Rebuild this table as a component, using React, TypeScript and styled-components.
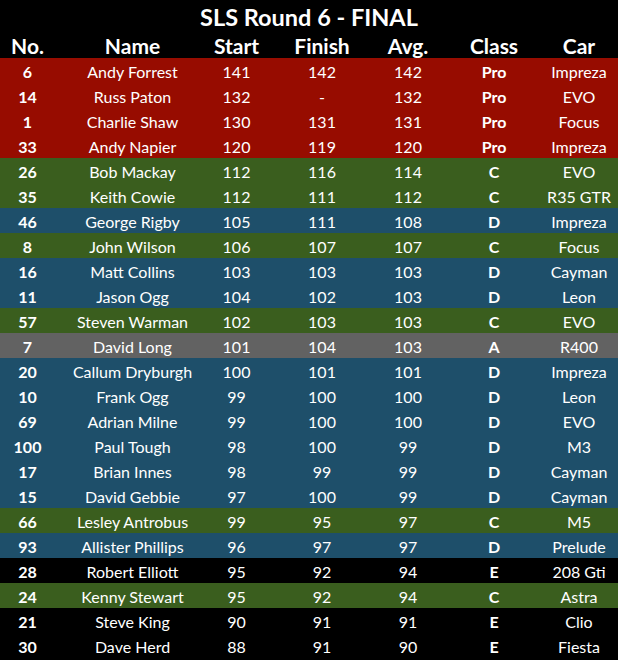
import { FC } from "react";
import styled, { createGlobalStyle } from "styled-components";

type Klass = "Pro" | "C" | "D" | "A" | "E"

interface IEntry {
    no: string
    name: string
    start: string
    finish: string
    avg: string
    klass: Klass
    car: string
}

const rowColors: Record<Klass, string> = {
    Pro: "#970c00",
    C: "#3a5e1e",
    D: "#1e4f6a",
    A: "#626262",
    E: "#000000",
}

const entries: IEntry[] = [
    { no: "6", name: "Andy Forrest", start: "141", finish: "142", avg: "142", klass: "Pro", car: "Impreza" },
    { no: "14", name: "Russ Paton", start: "132", finish: "-", avg: "132", klass: "Pro", car: "EVO" },
    { no: "1", name: "Charlie Shaw", start: "130", finish: "131", avg: "131", klass: "Pro", car: "Focus" },
    { no: "33", name: "Andy Napier", start: "120", finish: "119", avg: "120", klass: "Pro", car: "Impreza" },
    { no: "26", name: "Bob Mackay", start: "112", finish: "116", avg: "114", klass: "C", car: "EVO" },
    { no: "35", name: "Keith Cowie", start: "112", finish: "111", avg: "112", klass: "C", car: "R35 GTR" },
    { no: "46", name: "George Rigby", start: "105", finish: "111", avg: "108", klass: "D", car: "Impreza" },
    { no: "8", name: "John Wilson", start: "106", finish: "107", avg: "107", klass: "C", car: "Focus" },
    { no: "16", name: "Matt Collins", start: "103", finish: "103", avg: "103", klass: "D", car: "Cayman" },
    { no: "11", name: "Jason Ogg", start: "104", finish: "102", avg: "103", klass: "D", car: "Leon" },
    { no: "57", name: "Steven Warman", start: "102", finish: "103", avg: "103", klass: "C", car: "EVO" },
    { no: "7", name: "David Long", start: "101", finish: "104", avg: "103", klass: "A", car: "R400" },
    { no: "20", name: "Callum Dryburgh", start: "100", finish: "101", avg: "101", klass: "D", car: "Impreza" },
    { no: "10", name: "Frank Ogg", start: "99", finish: "100", avg: "100", klass: "D", car: "Leon" },
    { no: "69", name: "Adrian Milne", start: "99", finish: "100", avg: "100", klass: "D", car: "EVO" },
    { no: "100", name: "Paul Tough", start: "98", finish: "100", avg: "99", klass: "D", car: "M3" },
    { no: "17", name: "Brian Innes", start: "98", finish: "99", avg: "99", klass: "D", car: "Cayman" },
    { no: "15", name: "David Gebbie", start: "97", finish: "100", avg: "99", klass: "D", car: "Cayman" },
    { no: "66", name: "Lesley Antrobus", start: "99", finish: "95", avg: "97", klass: "C", car: "M5" },
    { no: "93", name: "Allister Phillips", start: "96", finish: "97", avg: "97", klass: "D", car: "Prelude" },
    { no: "28", name: "Robert Elliott", start: "95", finish: "92", avg: "94", klass: "E", car: "208 Gti" },
    { no: "24", name: "Kenny Stewart", start: "95", finish: "92", avg: "94", klass: "C", car: "Astra" },
    { no: "21", name: "Steve King", start: "90", finish: "91", avg: "91", klass: "E", car: "Clio" },
    { no: "30", name: "Dave Herd", start: "88", finish: "91", avg: "90", klass: "E", car: "Fiesta" },
]

const columns = "55px 155px 53px 118px 54px 118px 52px"

const App: FC = () => {
    return <>
        <GlobalStyle />
        <Sheet>
            <Title>SLS Round 6 - FINAL</Title>
            <HeaderRow>
                <span>No.</span>
                <span>Name</span>
                <span>Start</span>
                <span>Finish</span>
                <span>Avg.</span>
                <span>Class</span>
                <span>Car</span>
            </HeaderRow>
            {entries.map(e =>
                <Row key={e.no} bg={rowColors[e.klass]}>
                    <Cell bold>{e.no}</Cell>
                    <Cell>{e.name}</Cell>
                    <Cell>{e.start}</Cell>
                    <Cell>{e.finish}</Cell>
                    <Cell>{e.avg}</Cell>
                    <Cell bold>{e.klass}</Cell>
                    <Cell>{e.car}</Cell>
                </Row>
            )}
        </Sheet>
    </>
}

export default App

const GlobalStyle = createGlobalStyle`
    html, body {
        margin: 0;
        padding: 0;
        background: #000;
    }
`

const Sheet = styled.div`
    width: 618px;
    height: 660px;
    background-color: #000;
    color: #fff;
    font-family: Lato, "Liberation Sans", sans-serif;
    display: flex;
    flex-direction: column;
    overflow: hidden;
`

const Title = styled.div`
    height: 33px;
    flex-shrink: 0;
    display: flex;
    align-items: center;
    justify-content: center;
    font-size: 23.5px;
    font-weight: 700;
`

const HeaderRow = styled.div`
    height: 25px;
    flex-shrink: 0;
    box-sizing: border-box;
    padding-bottom: 3px;
    display: grid;
    grid-template-columns: ${columns};
    align-items: center;
    justify-items: center;
    font-size: 21px;
    font-weight: 700;
`

const Row = styled.div<{ bg: string }>`
    height: 25px;
    flex-shrink: 0;
    box-sizing: border-box;
    padding-top: 2px;
    display: grid;
    grid-template-columns: ${columns};
    align-items: center;
    justify-items: center;
    background-color: ${p => p.bg};
    font-size: 16px;
`

const Cell = styled.span<{ bold?: boolean }>`
    font-weight: ${p => p.bold ? 700 : 400};
    white-space: nowrap;
`
